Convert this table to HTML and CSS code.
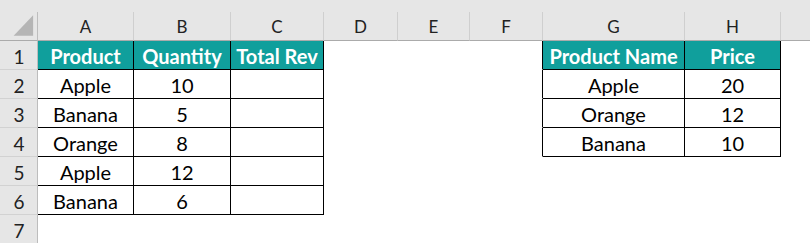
FILE: index.html
```html
<!DOCTYPE html>
<html>
<head>
<meta charset="utf-8">
<link rel="stylesheet" href="styles.css">
</head>
<body>
<div class="topband"></div>
<div class="sheet">
  <div class="corner"><svg width="38" height="28" viewBox="0 0 38 28"><polygon points="34,3 34,24 14,24" fill="#b5b5b5"/></svg></div>
  <div class="ch">A</div><div class="ch">B</div><div class="ch">C</div><div class="ch">D</div><div class="ch">E</div><div class="ch">F</div><div class="ch">G</div><div class="ch">H</div><div class="ch last"></div>

  <div class="rh">1</div>
  <div class="c hd bl">Product</div><div class="c hd bl">Quantity</div><div class="c hd bl">Total Rev</div>
  <div class="c"></div><div class="c"></div><div class="c br"></div>
  <div class="c hd bl">Product Name</div><div class="c hd bl">Price</div><div class="c"></div>

  <div class="rh">2</div>
  <div class="c bl">Apple</div><div class="c bl">10</div><div class="c bl"></div>
  <div class="c"></div><div class="c"></div><div class="c br"></div>
  <div class="c bl">Apple</div><div class="c bl">20</div><div class="c"></div>

  <div class="rh">3</div>
  <div class="c bl">Banana</div><div class="c bl">5</div><div class="c bl"></div>
  <div class="c"></div><div class="c"></div><div class="c br"></div>
  <div class="c bl">Orange</div><div class="c bl">12</div><div class="c"></div>

  <div class="rh">4</div>
  <div class="c bl">Orange</div><div class="c bl">8</div><div class="c bl"></div>
  <div class="c"></div><div class="c"></div><div class="c br"></div>
  <div class="c bl">Banana</div><div class="c bl">10</div><div class="c"></div>

  <div class="rh">5</div>
  <div class="c bl">Apple</div><div class="c bl">12</div><div class="c bl"></div>
  <div class="c"></div><div class="c"></div><div class="c"></div>
  <div class="c"></div><div class="c"></div><div class="c"></div>

  <div class="rh">6</div>
  <div class="c bl">Banana</div><div class="c bl">6</div><div class="c bl"></div>
  <div class="c"></div><div class="c"></div><div class="c"></div>
  <div class="c"></div><div class="c"></div><div class="c"></div>

  <div class="rh">7</div>
  <div class="c"></div><div class="c"></div><div class="c"></div>
  <div class="c"></div><div class="c"></div><div class="c"></div>
  <div class="c"></div><div class="c"></div><div class="c"></div>
</div>
</body>
</html>
```
FILE: styles.css
```css
html, body {
  margin: 0;
  padding: 0;
  background: #ffffff;
  width: 810px;
  height: 243px;
  overflow: hidden;
  font-family: Lato, "Liberation Sans", sans-serif;
}
.topband {
  height: 12px;
  background: #e6e6e6;
}
.sheet {
  display: grid;
  grid-template-columns: 38px 96px 97px 93px 74px 72px 73px 142px 96px 29px;
  grid-template-rows: 29px repeat(7, 29px);
}
.corner {
  background: #e6e6e6;
  border-right: 1px solid #bdbdbd;
  border-bottom: 1px solid #ababab;
  box-sizing: border-box;
  display: flex;
}
.corner svg { display: block; }
.ch {
  background: #e6e6e6;
  border-right: 1px solid #cfcfcf;
  border-bottom: 1px solid #ababab;
  box-sizing: border-box;
  display: flex;
  align-items: flex-end;
  justify-content: center;
  padding-bottom: 3px;
  font-size: 17px;
  color: #222222;
}
.ch.last { border-right: none; }
.rh {
  background: #e6e6e6;
  border-right: 1px solid #bdbdbd;
  border-bottom: 1px solid #d2d2d2;
  box-sizing: border-box;
  display: flex;
  align-items: center;
  justify-content: center;
  padding-top: 2px;
  padding-left: 1px;
  font-size: 19px;
  color: #222222;
}
.c {
  box-sizing: border-box;
  border-right: 1px solid #ffffff;
  border-bottom: 1px solid #ffffff;
  display: flex;
  align-items: center;
  justify-content: center;
  padding-top: 2px;
  font-size: 20px;
  color: #000000;
  white-space: nowrap;
  overflow: hidden;
}
.c.bl {
  border-right-color: #000000;
  border-bottom-color: #000000;
}
.c.br {
  border-right-color: #000000;
}
.c.hd {
  background: #109f9c;
  color: #ffffff;
  font-weight: 700;
}
```
